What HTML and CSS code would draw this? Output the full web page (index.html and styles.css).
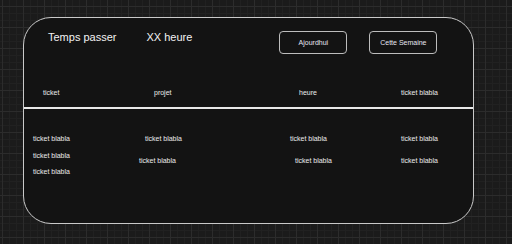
FILE: index.html
```html
<!DOCTYPE html>
<html lang="fr">

<head>
    <meta charset="UTF-8">
    <meta name="viewport" content="width=device-width, initial-scale=1.0">
    <title>Temps passer</title>
    <link rel="stylesheet" href="styles.css">
</head>

<body>
    <div class="card">
        <div class="top">
            <h2 class="title">Temps passer</h2>
            <h2 class="title total">XX heure</h2>
            <button class="btn btn-day">Ajourdhui</button>
            <button class="btn btn-week">Cette Semaine</button>
        </div>

        <div class="thead">
            <span class="th th-ticket">ticket</span>
            <span class="th th-projet">projet</span>
            <span class="th th-heure">heure</span>
            <span class="th">ticket blabla</span>
        </div>

        <div class="tbody">
            <div class="col col-1">
                <p>ticket blabla</p>
                <p>ticket blabla</p>
                <p>ticket blabla</p>
            </div>
            <div class="col col-2">
                <p class="shift">ticket blabla</p>
                <p>ticket blabla</p>
            </div>
            <div class="col col-3">
                <p>ticket blabla</p>
                <p class="shift">ticket blabla</p>
            </div>
            <div class="col col-4">
                <p>ticket blabla</p>
                <p>ticket blabla</p>
            </div>
        </div>
    </div>
</body>

</html>
```

FILE: styles.css
```css
body {
    margin: 0;
    height: 244px;
    background-color: #1b1b1b;
    background-image:
        linear-gradient(to right, #2c2c2c 1px, transparent 1px),
        linear-gradient(to bottom, #2c2c2c 1px, transparent 1px),
        linear-gradient(to right, #212121 1px, transparent 1px),
        linear-gradient(to bottom, #212121 1px, transparent 1px);
    background-size: 21px 21px, 21px 21px, 7px 7px, 7px 7px;
    background-position: 2px 6px;
    font-family: "Liberation Sans", Arial, sans-serif;
    color: #ececec;
    overflow: hidden;
}

.card {
    box-sizing: border-box;
    width: 451px;
    height: 207px;
    margin: 17px 0 0 23px;
    background-color: #131313;
    border: 1px solid #c9c9c9;
    border-radius: 28px;
}

.top {
    display: flex;
    align-items: flex-start;
    padding: 13px 0 0 24px;
}

.title {
    margin: 0;
    font-size: 11px;
    line-height: 13px;
    font-weight: normal;
    color: #f2f2f2;
}

.total {
    margin-left: 30px;
}

.btn {
    box-sizing: border-box;
    width: 68px;
    height: 23px;
    padding: 0;
    background-color: #131313;
    color: #e6e6f0;
    border: 1px solid #bdbdbd;
    border-radius: 4px;
    font-family: "Liberation Sans", Arial, sans-serif;
    font-size: 7px;
}

.btn-day {
    margin-left: 87px;
}

.btn-week {
    margin-left: 22px;
}

.thead {
    display: flex;
    margin-top: 34px;
    padding-left: 19px;
    padding-bottom: 10px;
    border-bottom: 2px solid #e8e8e8;
}

.th {
    font-size: 7px;
    line-height: 9px;
}

.th-ticket {
    width: 111px;
}

.th-projet {
    width: 145px;
}

.th-heure {
    width: 102px;
}

.tbody {
    display: flex;
    padding-top: 25px;
    padding-left: 9px;
}

.col p {
    margin: 0;
    font-size: 7px;
    line-height: 9px;
}

.col-1 {
    width: 106px;
}

.col-1 p + p {
    margin-top: 7.5px;
}

.col-2 {
    width: 151px;
}

.col-2 p.shift {
    margin-left: 6px;
}

.col-3 {
    width: 111px;
}

.col-3 p.shift {
    margin-left: 5px;
}

.col-2 p + p,
.col-3 p + p,
.col-4 p + p {
    margin-top: 13px;
}
```
